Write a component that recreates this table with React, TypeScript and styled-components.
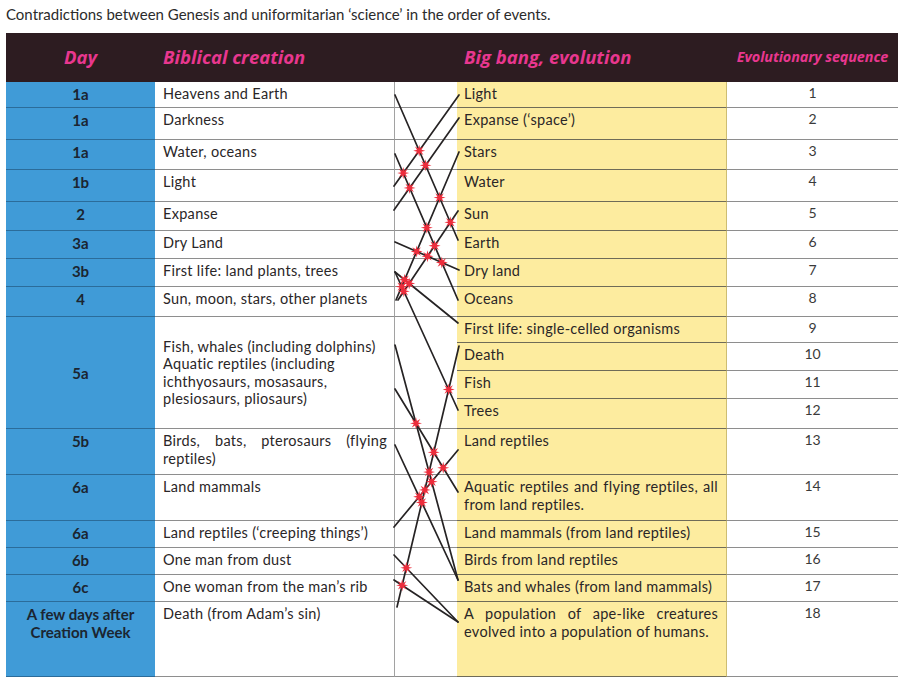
import React from 'react';
import styled, { createGlobalStyle } from 'styled-components';

const Global = createGlobalStyle`
  html, body { margin: 0; padding: 0; background: #ffffff; }
  body { font-family: Lato, "Open Sans", "Liberation Sans", sans-serif; color: #2a2627; }
`;

const Page = styled.div`
  width: 900px;
  box-sizing: border-box;
  padding: 3px 2px 0 6px;
`;

const Title = styled.div`
  height: 30px;
  font-size: 15px;
  line-height: 22px;
  color: #2b2b2b;
`;

const ROWS = [26, 32, 30, 32, 29, 28, 28, 30, 26, 28, 28, 30, 46, 46, 27, 27, 27, 75];

const Table = styled.div`
  display: grid;
  grid-template-columns: 149px 239px 63px 270px 171px;
  grid-template-rows: 49px ${ROWS.map((r) => `${r}px`).join(' ')};
  width: 892px;
`;

const HeadCell = styled.div<{ $center?: boolean; $small?: boolean; $pad?: number }>`
  background: #2d1c21;
  color: #e8378f;
  font-family: "Open Sans", Lato, sans-serif;
  font-weight: 700;
  font-style: italic;
  font-size: ${(p) => (p.$small ? '14.4px' : '18.5px')};
  letter-spacing: ${(p) => (p.$small ? '-0.1px' : '0')};
  display: flex;
  align-items: center;
  justify-content: ${(p) => (p.$center ? 'center' : 'flex-start')};
  padding-left: ${(p) => p.$pad ?? 0}px;
  padding-bottom: 2px;
  box-sizing: border-box;
`;

type Placed = { $row: number; $span?: number };

const DayCell = styled.div<Placed & { $center?: boolean }>`
  grid-column: 1;
  grid-row: ${(p) => p.$row + 1} / span ${(p) => p.$span ?? 1};
  background: #409bd7;
  border-bottom: 1px solid #2b6c9a;
  box-sizing: border-box;
  font-weight: 700;
  font-size: 15px;
  line-height: 18px;
  color: #1b2531;
  text-align: center;
  padding-top: ${(p) => (p.$center ? 0 : 3)}px;
  display: ${(p) => (p.$center ? 'flex' : 'block')};
  align-items: center;
  justify-content: center;
  white-space: pre-line;
`;

const BibleCell = styled.div<Placed & { $center?: boolean }>`
  grid-column: 2;
  grid-row: ${(p) => p.$row + 1} / span ${(p) => p.$span ?? 1};
  background: #ffffff;
  border-bottom: 1px solid #8e8e8e;
  box-sizing: border-box;
  font-size: 14.5px;
  letter-spacing: 0.3px;
  line-height: ${(p) => (p.$center ? 17.4 : 18)}px;
  color: #2a2627;
  padding: ${(p) => (p.$center ? 0 : 3)}px 7px 0 8px;
  display: ${(p) => (p.$center ? 'flex' : 'block')};
  flex-direction: column;
  justify-content: center;
`;

const LinkCell = styled.div<Placed>`
  grid-column: 3;
  grid-row: ${(p) => p.$row + 1} / span ${(p) => p.$span ?? 1};
  background: #ffffff;
  border-left: 1px solid #a2a2a2;
  border-bottom: 1px solid #8e8e8e;
  box-sizing: border-box;
`;

const EvoCell = styled.div<Placed>`
  grid-column: 4;
  grid-row: ${(p) => p.$row + 1};
  background: #fdec9f;
  border-bottom: 1px solid #6f6b57;
  border-right: 1px solid #cdbd72;
  box-sizing: border-box;
  font-size: 14.5px;
  letter-spacing: 0.3px;
  line-height: 18px;
  color: #2a2627;
  padding: 3px 8px 0 7px;
`;

const SeqCell = styled.div<Placed>`
  grid-column: 5;
  grid-row: ${(p) => p.$row + 1};
  background: #ffffff;
  border-bottom: 1px solid #8e8e8e;
  box-sizing: border-box;
  font-size: 14px;
  line-height: 18px;
  color: #3a3a3a;
  text-align: center;
  padding-top: 2px;
`;

const JustLine = styled.span`
  display: block;
  text-align: justify;
  text-align-last: justify;
`;

const Overlay = styled.svg`
  grid-column: 3;
  grid-row: 2 / -1;
  width: 63px;
  height: 595px;
  overflow: visible;
  z-index: 1;
  pointer-events: none;
`;

type LeftItem = { day: string; text: React.ReactNode; row: number; span?: number; center?: boolean };

const LEFT: LeftItem[] = [
  { day: '1a', text: 'Heavens and Earth', row: 1 },
  { day: '1a', text: 'Darkness', row: 2 },
  { day: '1a', text: 'Water, oceans', row: 3 },
  { day: '1b', text: 'Light', row: 4 },
  { day: '2', text: 'Expanse', row: 5 },
  { day: '3a', text: 'Dry Land', row: 6 },
  { day: '3b', text: 'First life: land plants, trees', row: 7 },
  { day: '4', text: 'Sun, moon, stars, other planets', row: 8 },
  {
    day: '5a',
    text: (
      <>
        <span>Fish, whales (including dolphins)</span>
        <span>Aquatic reptiles (including ichthyosaurs, mosasaurs, plesiosaurs, pliosaurs)</span>
      </>
    ),
    row: 9,
    span: 4,
    center: true,
  },
  {
    day: '5b',
    text: (
      <>
        <JustLine>Birds, bats, pterosaurs (flying</JustLine>
        reptiles)
      </>
    ),
    row: 13,
  },
  { day: '6a', text: 'Land mammals', row: 14 },
  { day: '6a', text: 'Land reptiles (‘creeping things’)', row: 15 },
  { day: '6b', text: 'One man from dust', row: 16 },
  { day: '6c', text: 'One woman from the man’s rib', row: 17 },
  { day: 'A few days after\nCreation Week', text: 'Death (from Adam’s sin)', row: 18 },
];

const RIGHT: React.ReactNode[] = [
  'Light',
  'Expanse (‘space’)',
  'Stars',
  'Water',
  'Sun',
  'Earth',
  'Dry land',
  'Oceans',
  'First life: single-celled organisms',
  'Death',
  'Fish',
  'Trees',
  'Land reptiles',
  (
    <>
      <JustLine>Aquatic reptiles and flying reptiles, all</JustLine>
      from land reptiles.
    </>
  ),
  'Land mammals (from land reptiles)',
  'Birds from land reptiles',
  'Bats and whales (from land mammals)',
  (
    <>
      <JustLine>A population of ape-like creatures</JustLine>
      evolved into a population of humans.
    </>
  ),
];

// Connector lines in local coordinates of the connector column (x from 394, y from 82)
const X0 = 394;
const Y0 = 82;
const LINKS: [number, number, number, number][] = [
  [395, 95, 458, 240],
  [395, 154, 458, 300],
  [394, 186, 459, 95],
  [394, 210, 459, 118],
  [396, 300, 459, 152],
  [398, 300, 458, 211],
  [395, 242, 459, 270],
  [395, 272, 458, 323],
  [395, 272, 458, 410],
  [395, 345, 458, 580],
  [395, 389, 458, 492],
  [395, 445, 458, 580],
  [394, 527, 458, 450],
  [397, 607, 459, 346],
  [394, 555, 458, 622],
  [394, 580, 458, 622],
].map(([a, b, c, d]) => [a - X0, b - Y0, c - X0, d - Y0] as [number, number, number, number]);

function crossings(links: [number, number, number, number][]) {
  const pts: [number, number][] = [];
  for (let i = 0; i < links.length; i++) {
    for (let j = i + 1; j < links.length; j++) {
      const [x1, y1, x2, y2] = links[i];
      const [x3, y3, x4, y4] = links[j];
      const den = (x1 - x2) * (y3 - y4) - (y1 - y2) * (x3 - x4);
      if (Math.abs(den) < 1e-6) continue;
      const t = ((x1 - x3) * (y3 - y4) - (y1 - y3) * (x3 - x4)) / den;
      const u = -((x1 - x2) * (y1 - y3) - (y1 - y2) * (x1 - x3)) / den;
      if (t > 0.03 && t < 0.97 && u > 0.03 && u < 0.97) {
        pts.push([x1 + t * (x2 - x1), y1 + t * (y2 - y1)]);
      }
    }
  }
  return pts;
}

function starPoints(cx: number, cy: number) {
  const pts: string[] = [];
  const n = 8;
  for (let k = 0; k < n * 2; k++) {
    const r = k % 2 === 0 ? 6 : 2.4;
    const a = (Math.PI * k) / n - Math.PI / 2;
    pts.push(`${(cx + r * Math.cos(a)).toFixed(2)},${(cy + r * Math.sin(a)).toFixed(2)}`);
  }
  return pts.join(' ');
}

const Connectors: React.FC = () => {
  const stars = crossings(LINKS);
  return (
    <Overlay viewBox="0 0 63 595">
      {LINKS.map(([a, b, c, d], i) => (
        <line key={i} x1={a} y1={b} x2={c} y2={d} stroke="#262324" strokeWidth={1.7} strokeLinecap="round" />
      ))}
      {stars.map(([x, y], i) => (
        <polygon key={i} points={starPoints(x, y)} fill="#ec2d3c" />
      ))}
    </Overlay>
  );
};

export default function App() {
  return (
    <Page>
      <Global />
      <Title>Contradictions between Genesis and uniformitarian ‘science’ in the order of events.</Title>
      <Table>
        <HeadCell $center>Day</HeadCell>
        <HeadCell $pad={8}>Biblical creation</HeadCell>
        <HeadCell />
        <HeadCell $pad={7}>Big bang, evolution</HeadCell>
        <HeadCell $center $small>Evolutionary sequence</HeadCell>

        {LEFT.map((item, i) => (
          <React.Fragment key={`l${i}`}>
            <DayCell $row={item.row} $span={item.span} $center={item.center}>
              {item.day}
            </DayCell>
            <BibleCell $row={item.row} $span={item.span} $center={item.center}>
              {item.text}
            </BibleCell>
            <LinkCell $row={item.row} $span={item.span} />
          </React.Fragment>
        ))}

        {RIGHT.map((text, i) => (
          <React.Fragment key={`r${i}`}>
            <EvoCell $row={i + 1}>{text}</EvoCell>
            <SeqCell $row={i + 1}>{i + 1}</SeqCell>
          </React.Fragment>
        ))}

        <Connectors />
      </Table>
    </Page>
  );
}
